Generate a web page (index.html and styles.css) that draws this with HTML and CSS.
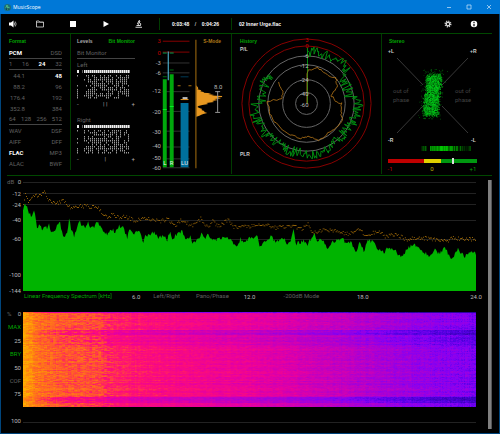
FILE: index.html
```html
<!DOCTYPE html>
<html lang="en">
<head>
    <meta charset="UTF-8">
    <meta name="viewport" content="width=device-width, initial-scale=1.0">
    <title>MusicScope</title>
    <link rel="stylesheet" href="styles.css">
</head>
<body>
    <div class="window">
        <header class="titlebar">
            <svg class="logo" viewBox="0 0 14 14"><circle cx="7" cy="7" r="7" fill="#1c6e78"/><path d="M3 7l2-1 1-4 2 9 1-5 2 1" fill="none" stroke="#5fd08a" stroke-width="1.4"/><path d="M6 8l-1 4M8 8l2 4" stroke="#082c38" stroke-width="1.4"/></svg>
            <h1>MusicScope</h1>
            <button class="win-btn" aria-label="Minimize"><svg viewBox="0 0 6 6"><path d="M1 3.5h4"/></svg></button>
            <button class="win-btn" aria-label="Maximize"><svg viewBox="0 0 6 6"><path d="M1 1h4v4H1z"/></svg></button>
            <button class="win-btn" aria-label="Close"><svg viewBox="0 0 6 6"><path d="M1 1l4 4M5 1L1 5"/></svg></button>
        </header>

        <div class="toolbar">
            <button class="tool first" aria-label="Volume"><svg viewBox="0 0 16 16"><path d="M0 5h4l5-4v14l-5-4H0z" fill="#fff"/><path d="M10.500 5q2 3 0 6M12.500 3q3.500 5 0 10" fill="none" stroke="#ccc" stroke-width="1.500"/></svg></button>
            <button class="tool" aria-label="Open"><svg viewBox="0 0 16 16"><path d="M1 14V2h5l1.500 2H15v10z" fill="none" stroke="#ddd" stroke-width="1.600"/><path d="M1 5h14" stroke="#ddd"/></svg></button>
            <button class="tool" aria-label="Stop"><svg viewBox="0 0 16 16"><path d="M2 2h12v12H2z" fill="#fff"/></svg></button>
            <button class="tool" aria-label="Play"><svg viewBox="0 0 16 16"><path d="M3 2l11 6-11 6z" fill="#fff"/></svg></button>
            <button class="tool" aria-label="Analyze"><svg viewBox="0 0 16 16"><path d="M8 1l2 1-3 7-2-1zM9 5q4 2 2 6M3 11h8M1 14.500h13" fill="none" stroke="#eee" stroke-width="1.800"/></svg></button>
            <div class="time"><span>0:03:48</span><span class="slash">/</span><span>0:04:26</span></div>
            <div class="file">02 Inner Urge.flac</div>
            <button class="tool right" aria-label="Settings"><svg viewBox="0 0 16 16"><circle cx="8" cy="8" r="5.500" fill="none" stroke="#ccc" stroke-width="3" stroke-dasharray="2.300 2"/><circle cx="8" cy="8" r="3.500" fill="none" stroke="#ddd" stroke-width="2.500"/></svg></button>
            <button class="tool right" aria-label="Info"><svg viewBox="0 0 16 16"><circle cx="8" cy="8" r="6.500" fill="#fff"/><path d="M8 3.500v2.500M8 7.500v5" stroke="#000" stroke-width="2.400"/></svg></button>
        </div>

        <main class="content">
            <section class="panels">
                <div class="panel format">
                    <h2>Format</h2>
                    <div class="row line"><b>PCM</b><span>DSD</span></div>
                    <div class="row line"><span>1</span><span>16</span><b>24</b><span>32</span></div>
                    <div class="row rate"><span>44.1</span><b>48</b></div>
                    <div class="row rate"><span>88.2</span><span>96</span></div>
                    <div class="row rate"><span>176.4</span><span>192</span></div>
                    <div class="row rate"><span>352.8</span><span>384</span></div>
                    <div class="row line"><span>64</span><span>128</span><span>256</span><span>512</span></div>
                    <div class="row"><span>WAV</span><span>DSF</span></div>
                    <div class="row"><span>AIFF</span><span>DFF</span></div>
                    <div class="row"><b>FLAC</b><span>MP3</span></div>
                    <div class="row"><span>ALAC</span><span>BWF</span></div>
                </div>

                <div class="panel levels">
                    <div class="switch">
                        <button>Levels</button>
                        <button class="on">Bit Monitor</button>
                    </div>
                    <div class="row line"><span>Bit Monitor</span></div>
                    <div class="row"><span>Left</span></div>
                    <svg class="bits" viewBox="0 0 58 29"><path class="bits-head"/><path class="bits-body"/></svg>
                    <div class="row sign"><span>-</span><i>| |</i><span>+</span></div>
                    <div class="row"><span>Right</span></div>
                    <svg class="bits" viewBox="0 0 58 29"><path class="bits-head"/><path class="bits-body"/></svg>
                    <div class="row sign"><span>-</span><i>|</i><span>+</span></div>
                </div>

                <svg class="meter" viewBox="0 0 87 140">
                    <g class="red-line"><path d="M18 6.500h27M18 17.500h27"/></g>
                    <path class="grid" d="M18 28.500h27M18 38.500h27M18 57.500h27M18 77.500h27M18 97.500h27M18 113.500h27M18 125.500h27M18 134.500h27"/>
                    <g class="num end">
                        <text class="red" x="16" y="8">3</text><text class="red" x="16" y="20">0</text>
                        <text x="16" y="31">-3</text><text x="16" y="41">-6</text>
                        <text x="16" y="59">-12</text><text x="16" y="80">-20</text>
                        <text x="16" y="100">-30</text><text x="16" y="115">-40</text>
                        <text x="16" y="127">-50</text><text x="16" y="137">-60</text>
                    </g>
                    <path fill="#00a80c" d="M18 45h4v89h-4zM25 40h4v94h-4z"/>
                    <path fill="#00f020" d="M18 75h4v1h-4zM25 72h4v1h-4z"/>
                    <path fill="#00a050" d="M18 18h4v1h-4zM25 18h4v1h-4z"/>
                    <path fill="#006c10" d="M18 42h4v1h-4zM25 35h4v1h-4z"/>
                    <path fill="#58c8e8" d="M23 17h1v29h-1z"/>
                    <path fill="#00709c" d="M36 69h8v65h-8z"/>
                    <path fill="#003c58" d="M36 42h8v1h-8z"/>
                    <path fill="#bbb" d="M38 63h5v2h-5z"/>
                    <path fill="#e89820" d="M36 65h8v1h-8z"/>
                    <path fill="#a87010" d="M33 51h3v1h-3zM44 51h3v1h-3zM51 5h1v130h-1z"/>
                    <g class="num bar-name mid"><text x="20" y="132">L</text><text x="27" y="132">R</text><text x="40" y="132">LU</text></g>
                    <text class="mode" x="68" y="8">S-Mode</text>
                    <path fill="#e89820" d="M52 51L54 54L53 55L57 56L56 57L60 58L59 58.500L67 59L64 60L70 61L67 61.500L78 62L78 63L73 63.500L77 64.500L70 65L74 66L68 67L70 68L62 69L64 70L58 71L54 72L53 73L55 74L58 75L57 76L60 77L60 78L63 79L59 80L57 81L55 82L52 83z"/>
                    <path d="M73.500 57v21M71 57.500h5M71 78.500h5" stroke="#999" fill="none"/>
                    <text class="num mid" x="74" y="55">8.0</text>
                </svg>

                <div class="panel history">
                    <svg viewBox="1 0 150 140">
                        <g fill="none">
                            <circle class="red-line" cx="76" cy="70" r="65"/>
                            <circle class="red-line" cx="76" cy="70" r="58"/>
                            <circle class="ring" cx="76" cy="70" r="48"/>
                            <circle class="ring" cx="76" cy="70" r="39"/>
                            <circle class="ring" cx="76" cy="70" r="24"/>
                            <circle class="ring" cx="76" cy="70" r="11"/>
                        </g>
                        <path id="peakTrace"/>
                        <path id="loudTrace"/>
                        <text class="head" x="9" y="9">History</text>
                        <text class="tag" x="9" y="17">P/L</text>
                        <text class="tag" x="9" y="123">PLR</text>
                        <g class="num end">
                            <text class="red" x="78" y="8">3</text><text class="red" x="78" y="14">0</text>
                            <text x="78" y="24">-6</text><text x="78" y="34">-12</text>
                            <text x="78" y="48">-24</text><text x="78" y="62">-40</text><text x="78" y="73">-60</text>
                        </g>
                    </svg>
                </div>

                <div class="panel stereo">
                    <svg viewBox="4 0 110 140">
                        <path d="M19 24l26 27M90 24L64 51M19 99l26-27M90 99L64 72" stroke="#383838" fill="none"/>
                        <text class="head" x="11" y="9">Stereo</text>
                        <text class="tag" x="10" y="19">+L</text><text class="tag" x="92" y="19">+R</text>
                        <text class="tag" x="10" y="108">-R</text><text class="tag" x="93" y="108">-L</text>
                        <g class="phase">
                            <text x="15" y="59">out of</text><text x="15" y="68">phase</text>
                            <text x="77" y="59">out of</text><text x="77" y="68">phase</text>
                        </g>
                        <path id="cloudDim"/><path id="cloud"/>
                        <g id="strip"></g>
                        <path fill="#c00000" d="M10 125h36v4H10z"/>
                        <path fill="#e0d000" d="M46 125h17v4H46z"/>
                        <path fill="#009810" d="M63 125h36v4H63z"/>
                        <path fill="#ddd" d="M74 124h2v6h-2z"/>
                        <g class="num mid"><text class="red" x="12" y="137">-1</text><text class="yellow" x="54" y="137">0</text><text class="green" x="95" y="137">+1</text></g>
                    </svg>
                </div>
            </section>

            <div class="lower">
                <div class="plots">
                    <section class="spectrum">
                        <div class="db-axis">
                            <span><i>dB</i>0</span><span>-12</span><span>-24</span><span>-40</span><span>-60</span><span>-100</span><span>-144</span>
                        </div>
                        <svg class="spectrum-plot" viewBox="0 0 452 109" preserveAspectRatio="none">
                            <path d="M0 .5h452M0 11.500h452M0 22.500h452M0 38.500h452M0 57.500h452" stroke="#222" fill="none"/>
                            <path id="spectrumFill"/>
                            <path id="spectrumPeak"/>
                        </svg>
                        <div class="freq-axis">
                            <div><button class="on">Linear Frequency Spectrum [kHz]</button><span>6.0</span></div>
                            <div><button>Left/Right</button><button>Pano/Phase</button><span>12.0</span></div>
                            <div><button>-200dB Mode</button><span>18.0</span></div>
                            <div><span>24.0</span></div>
                        </div>
                    </section>

                    <section class="gram">
                        <div class="gram-axis">
                            <span><i>%</i>0</span>
                            <button class="on">MAX</button>
                            <span>25</span>
                            <button class="on">BRY</button>
                            <span>50</span>
                            <button>COF</button>
                            <span>75</span>
                            <span class="blank"></span>
                            <span>100</span>
                        </div>
                        <div class="gram-plot"><canvas id="gram" width="452" height="95"></canvas></div>
                    </section>
                </div>
                <div class="scrollbar"></div>
            </div>
        </main>
    </div>
    <script src="script.js"></script>
</body>
</html>
```

FILE: styles.css
```css
* {
    box-sizing: border-box;
}
body {
    margin: 0;
    background: #000;
    color: #bbb;
    font-family: Roboto, "Liberation Sans", Arial, sans-serif;
    font-size: 6px;
    line-height: 6px;
}
h1, h2 {
    margin: 0;
    font-size: 5px;
}
button {
    padding: 0;
    border: 0;
    background: none;
    color: inherit;
    font: inherit;
    cursor: pointer;
}
i {
    font-style: normal;
}
svg {
    display: block;
}
.window {
    display: flex;
    flex-direction: column;
    min-height: 100vh;
    border: 1px solid #00457c;
    border-top: 0;
}

/* title bar */
.titlebar {
    display: flex;
    align-items: center;
    height: 14px;
    margin: 0 -1px;
    padding: 0 1px 0 4px;
    background: #0078d7;
    color: #fff;
}
.titlebar h1 {
    flex: 1;
    margin-left: 2px;
    font-family: "Open Sans", sans-serif;
    font-weight: normal;
}
.logo {
    width: 7px;
    height: 7px;
}
.win-btn {
    width: 20px;
}
.win-btn svg {
    width: 6px;
    height: 6px;
    margin: auto;
    fill: none;
    stroke: #cfe6fa;
    stroke-width: .7;
}

/* toolbar */
.toolbar {
    display: flex;
    align-items: center;
    height: 20px;
    margin: 0 7px 0 6px;
    border-bottom: 1px solid #004800;
    color: #fff;
}
.toolbar, .switch, .panels h2, .head, .tag, .mode {
    font-family: "Liberation Sans", Arial, sans-serif;
    font-size: 5px;
    font-weight: bold;
}
.tool {
    width: 33px;
}
.tool svg {
    width: 8px;
    height: 8px;
    margin: auto;
}
.tool.first {
    width: 16px;
}
.tool.first svg {
    margin-left: 2px;
}
.tool.right {
    width: 26px;
}
.toolbar .tool:last-child {
    margin-right: 5px;
}
.time {
    display: flex;
    justify-content: space-between;
    width: 73px;
    margin-left: 4px;
    padding: 3px 12px;
    border: solid #003c00;
    border-width: 0 1px;
}
.slash {
    font-weight: normal;
}
.file {
    flex: 1;
    margin-left: 7px;
}

/* upper panels */
.content {
    display: flex;
    flex: 1;
    flex-direction: column;
    padding: 0 7px 4px 6px;
}
.panels {
    display: grid;
    grid-template-columns: 64px 74px 87px 150fr 110fr;
    padding-bottom: 1px;
    border-bottom: 1px solid #004800;
}
.panels h2 {
    height: 14px;
    padding-top: 4px;
    color: #00a800;
}
.format {
    margin-bottom: 4px;
    padding: 0 8px 0 2px;
    border-right: 1px solid #003c00;
    color: #606060;
}
.row {
    display: flex;
    align-items: center;
    justify-content: space-between;
    height: 11px;
}
.row b {
    color: #fff;
}
.line {
    border-bottom: 1px solid #444;
}
.rate span:first-child {
    width: 16px;
    text-align: right;
}
.levels {
    padding: 0 10px 0 6px;
    color: #606060;
}
.switch {
    display: flex;
    align-items: flex-start;
    justify-content: space-between;
    height: 14px;
    padding-top: 4px;
    color: #aaa;
}
.on {
    color: #00a800;
}
.bits {
    width: 100%;
    height: 29px;
}
.bits-head {
    fill: #eee;
}
.bits-body {
    fill: #999;
}
.sign {
    height: 10px;
    color: #aaa;
}
.sign + .row {
    margin-top: 5px;
}
.meter {
    width: 100%;
    height: 140px;
    border-right: 1px solid #003c00;
}
.history {
    border-right: 1px solid #003c00;
}
.history svg, .stereo svg {
    width: 100%;
    height: auto;
}

/* chart parts */
.num {
    fill: #bbb;
}
.bar-name {
    fill: #eee;
}
.end {
    text-anchor: end;
}
.mid {
    text-anchor: middle;
}
.num .red {
    fill: #c00000;
}
.num .yellow {
    fill: #c0b000;
}
.num .green {
    fill: #00a000;
}
.mode {
    fill: #b07818;
    text-anchor: middle;
}
.head {
    fill: #00a800;
}
.tag {
    fill: #ccc;
}
.phase {
    fill: #444;
}
.grid, .ring {
    fill: none;
    stroke: #666;
}
.grid {
    stroke: #333;
}
.red-line {
    fill: none;
    stroke: #880000;
}
#peakTrace {
    fill: none;
    stroke: #008c10;
    stroke-width: 1;
}
#loudTrace {
    fill: none;
    stroke: #b87818;
    stroke-width: .8;
}
#cloud {
    fill: #00c818;
}
#cloudDim {
    fill: #007c0c;
}

/* spectrum and spectrogram */
.lower {
    display: flex;
    flex: 1;
    padding-top: 4px;
}
.plots {
    flex: 1;
    margin-right: 12px;
    padding-top: 2px;
}
.scrollbar {
    width: 4px;
    background: #808080;
    border-right: 1px solid #555;
}
.spectrum, .gram {
    display: grid;
    grid-template-columns: 16px 1fr;
}
.db-axis {
    display: grid;
    grid-template-rows: 12px 11px 15px 19px 36px 16px;
    height: 109px;
    margin: -3px 2px 0 0;
    text-align: right;
}
.db-axis span:first-child, .gram-axis span:first-child {
    display: flex;
    justify-content: space-between;
}
.db-axis i, .gram-axis i {
    color: #606060;
}
.spectrum-plot {
    width: 100%;
    height: 109px;
}
#spectrumFill {
    fill: #00b400;
}
#spectrumPeak {
    fill: #a87008;
}
.freq-axis {
    display: grid;
    grid-column: 2;
    grid-template-columns: repeat(4, minmax(0, 1fr));
    height: 21px;
    color: #606060;
}
.freq-axis div {
    display: flex;
    align-items: flex-start;
    padding: 2px 0 0 1px;
}
.freq-axis div:nth-child(2) {
    padding-left: 17px;
}
.freq-axis div:nth-child(3) {
    padding-left: 34px;
}
.freq-axis button {
    white-space: nowrap;
}
.freq-axis button + button {
    margin-left: 16px;
}
.freq-axis span {
    width: 12px;
    margin: 1px -6px 0 auto;
    color: #bbb;
    text-align: center;
}
.gram-axis {
    display: flex;
    flex-direction: column;
    justify-content: space-between;
    height: 113px;
    margin: -1px 2px 0 0;
    text-align: right;
}
.gram-axis button {
    text-align: right;
}
.gram-axis button:not(.on) {
    color: #606060;
}
.gram-axis .blank {
    height: 6px;
}
.gram-plot {
    height: 111px;
    border-bottom: 1px solid #222;
}
.gram-plot canvas {
    display: block;
    width: 100%;
    height: 95px;
}
```

FILE: script.js
```js
// Small seeded generator so the plots look the same on every load
let seed = 7;
function rnd() {
    seed = (seed * 16807) % 2147483647;
    return seed / 2147483647;
}
function jitter(amount) {
    return (rnd() * 2 - 1) * amount;
}
function lerpAt(points, x) {
    for (let i = 1; i < points.length; i++) {
        if (x <= points[i][0]) {
            const [x0, y0] = points[i - 1];
            const [x1, y1] = points[i];
            return y0 + (y1 - y0) * (x - x0) / (x1 - x0);
        }
    }
    return points[points.length - 1][1];
}
function dot(x, y, w = 1, h = 1) {
    return `M${x.toFixed(1)} ${y.toFixed(1)}h${w}v${h}h-${w}z`;
}

// Bit monitor
document.querySelectorAll('.bits').forEach(svg => {
    let head = dot(0, 0, 2, 3);
    let body = dot(5, 0, 0.6, 3);
    for (let x = 7; x < 52; x += 2) {
        head += dot(x, 0, 1.6, 3);
    }
    for (let y = 5; y < 28; y += 2) {
        if (rnd() < 0.8) body += dot(0, y, 1, 1.4);
        for (let x = 7; x < 52; x += 2) {
            const density = x < 11 ? 0.3 : 0.68;
            if (rnd() < density) body += dot(x, y, 1, 1.5);
        }
    }
    svg.querySelector('.bits-head').setAttribute('d', head);
    svg.querySelector('.bits-body').setAttribute('d', body);
});

// History, polar peak trace
const peakRadius = [[0, 52], [50, 54], [56, 44], [80, 44], [84, 52], [130, 48], [160, 51], [220, 50], [268, 54], [272, 45], [308, 48]];
let peak = 'M77 70V14';
for (let a = 1; a < 308; a += 1.1) {
    const r = lerpAt(peakRadius, a) + jitter(5.5);
    const t = a * Math.PI / 180;
    peak += `L${(76 + r * Math.sin(t)).toFixed(1)} ${(70 - r * Math.cos(t)).toFixed(1)}`;
}
document.getElementById('peakTrace').setAttribute('d', peak);

// History, loudness trace
const loud = [[76.5, 70], [76.5, 40], [79, 36], [87, 34], [93, 38], [100, 43], [106, 45], [107, 53], [101, 62], [104, 67], [111, 70], [111, 80], [112, 88], [105, 95], [98, 100], [88, 107], [78, 103], [70, 105], [57, 100], [45, 90], [39, 80], [37, 68], [51, 65], [52, 57], [48, 49]];
let loudPath = 'M76.5 70V40';
for (let i = 2; i < loud.length; i++) {
    for (let k = 1; k <= 5; k++) {
        const x = loud[i - 1][0] + (loud[i][0] - loud[i - 1][0]) * k / 5;
        const y = loud[i - 1][1] + (loud[i][1] - loud[i - 1][1]) * k / 5;
        loudPath += `L${(x + jitter(0.8)).toFixed(1)} ${(y + jitter(0.8)).toFixed(1)}`;
    }
}
document.getElementById('loudTrace').setAttribute('d', loudPath);

// Stereo cloud, leaning slightly to the right
let cloud = '';
let cloudDim = '';
for (let i = 0; i < 1700; i++) {
    const v = jitter(1);
    const x = 54 - v * 2 + jitter(7) + jitter(2);
    const y = 61 + v * 20 + jitter(2);
    if (i % 2) cloud += dot(x, y, 0.7, 0.7);
    else cloudDim += dot(x, y, 1, 1);
}
for (let i = 0; i < 300; i++) {
    const v = jitter(1);
    cloudDim += dot(54 - v * 3 + jitter(7) + jitter(6), 60 + v * 25, 0.7, 0.7);
}
document.getElementById('cloud').setAttribute('d', cloud);
document.getElementById('cloudDim').setAttribute('d', cloudDim);

// Correlation strip
let strip = '';
for (let x = 43; x < 93; x++) {
    const near = Math.max(0, 1 - Math.abs(x - 63) / 22);
    const gap = x > 48 && x < 52;
    const light = gap ? 0 : Math.round(rnd() * 90 + near * 130);
    strip += `<rect x="${x}" y="112" width="1" height="5" fill="rgb(0,${light},0)"/>`;
}
document.getElementById('strip').innerHTML = strip;

// Spectrum: x and y in thirds of a plot unit, plot starts at 68 / 24
const level = [[68, 106], [73, 84], [80, 100], [88, 120], [95, 130], [100, 105], [105, 130], [110, 158], [120, 150], [125, 165], [132, 152], [140, 165], [146, 152], [155, 178], [165, 163], [178, 140], [185, 175], [192, 190], [200, 178], [206, 134], [212, 165], [222, 188], [237, 137], [245, 158], [258, 158], [264, 142], [270, 163], [280, 160], [290, 142], [300, 160], [310, 178], [320, 180], [335, 165], [343, 175], [355, 155], [368, 160], [380, 193], [388, 158], [395, 178], [420, 172], [427, 205], [435, 180], [447, 188], [455, 170], [470, 190], [485, 188], [500, 197], [508, 172], [515, 195], [528, 180], [545, 170], [555, 200], [570, 185], [575, 210], [590, 195], [605, 178], [612, 195], [620, 182], [640, 197], [675, 190], [690, 200], [705, 215], [715, 208], [720, 190], [727, 212], [740, 195], [750, 188], [770, 190], [775, 215], [790, 205], [810, 185], [825, 205], [850, 190], [860, 215], [870, 200], [878, 170], [885, 210], [910, 200], [920, 210], [940, 180], [950, 200], [965, 197], [980, 230], [990, 205], [1010, 200], [1025, 190], [1035, 210], [1050, 205], [1065, 235], [1075, 200], [1090, 235], [1100, 195], [1115, 205], [1130, 225], [1150, 235], [1160, 220], [1180, 225], [1190, 240], [1205, 250], [1215, 225], [1240, 210], [1260, 230], [1285, 245], [1300, 225], [1315, 240], [1330, 220], [1350, 255], [1370, 225], [1390, 250], [1405, 235], [1425, 238]];
const hold = [[68, 90], [73, 60], [85, 82], [95, 68], [115, 62], [130, 52], [145, 80], [165, 88], [190, 78], [200, 98], [260, 95], [290, 100], [310, 125], [325, 130], [335, 114], [345, 130], [370, 125], [400, 138], [440, 132], [480, 140], [500, 135], [520, 155], [540, 138], [575, 155], [600, 132], [620, 160], [635, 140], [650, 155], [680, 137], [700, 158], [750, 155], [770, 155], [800, 148], [815, 160], [880, 155], [900, 165], [920, 150], [935, 175], [970, 165], [1010, 172], [1040, 178], [1070, 165], [1095, 182], [1130, 172], [1150, 185], [1190, 182], [1210, 195], [1250, 190], [1300, 195], [1335, 200], [1350, 190], [1390, 195], [1425, 195]];
let fill = 'M0 109';
let holdDots = '';
for (let x = 0; x <= 452; x++) {
    const y = (lerpAt(level, 68 + x * 3) - 24) / 3 + jitter(2);
    fill += `L${x} ${y.toFixed(1)}`;
    const h = (lerpAt(hold, 68 + x * 3) - 24) / 3 + jitter(2);
    holdDots += dot(x, h, 0.9, 0.9);
}
document.getElementById('spectrumFill').setAttribute('d', fill + 'V109z');
document.getElementById('spectrumPeak').setAttribute('d', holdDots);

// Spectrogram
const palette = [[0, [255, 176, 0]], [0.15, [255, 132, 16]], [0.3, [255, 84, 48]], [0.42, [255, 16, 116]], [0.55, [232, 0, 160]], [0.7, [184, 0, 200]], [0.85, [132, 0, 244]], [0.95, [84, 0, 228]], [1.1, [44, 0, 160]]];
const paletteOf = [0, 1, 2].map(c => palette.map(([t, rgb]) => [t, rgb[c]]));
const tone = [[0, 0.04], [0.015, 0.1], [0.03, 0.2], [0.08, 0.27], [0.165, 0.31], [0.18, 0.37], [0.3, 0.45], [0.5, 0.54], [0.6, 0.6], [0.72, 0.68], [0.83, 0.77], [1, 0.87]];
const canvas = document.getElementById('gram');
const ctx = canvas.getContext('2d');
const w = canvas.width;
const h = canvas.height;
const image = ctx.createImageData(w, h);
const colNoise = Array.from({ length: w }, () => jitter(0.02));
for (let y = 0; y < h; y++) {
    let band = 0;
    if (y > 17 && y < 23) band = 0.14;
    else if (y >= 23 && y < 34) band = 0.06;
    else if (y > 84 && y < 91) band = 0.15;
    else if (y >= 91) band = 0.06;
    if (y === 0) band = 0.3;
    const rowNoise = jitter(0.03);
    let streak = 0;
    for (let x = 0; x < w; x++) {
        if (x % 3 === 0) streak = jitter(x < 90 ? 0.07 : 0.03);
        const weight = Math.min(1, 0.25 + x / 70);
        let t = lerpAt(tone, x / w) + band * weight + rowNoise + streak + colNoise[x] + jitter(0.03);
        t = Math.max(0, t);
        const i = (y * w + x) * 4;
        image.data[i] = lerpAt(paletteOf[0], t);
        image.data[i + 1] = lerpAt(paletteOf[1], t);
        image.data[i + 2] = lerpAt(paletteOf[2], t);
        image.data[i + 3] = 255;
    }
}
ctx.putImageData(image, 0, 0);
```
